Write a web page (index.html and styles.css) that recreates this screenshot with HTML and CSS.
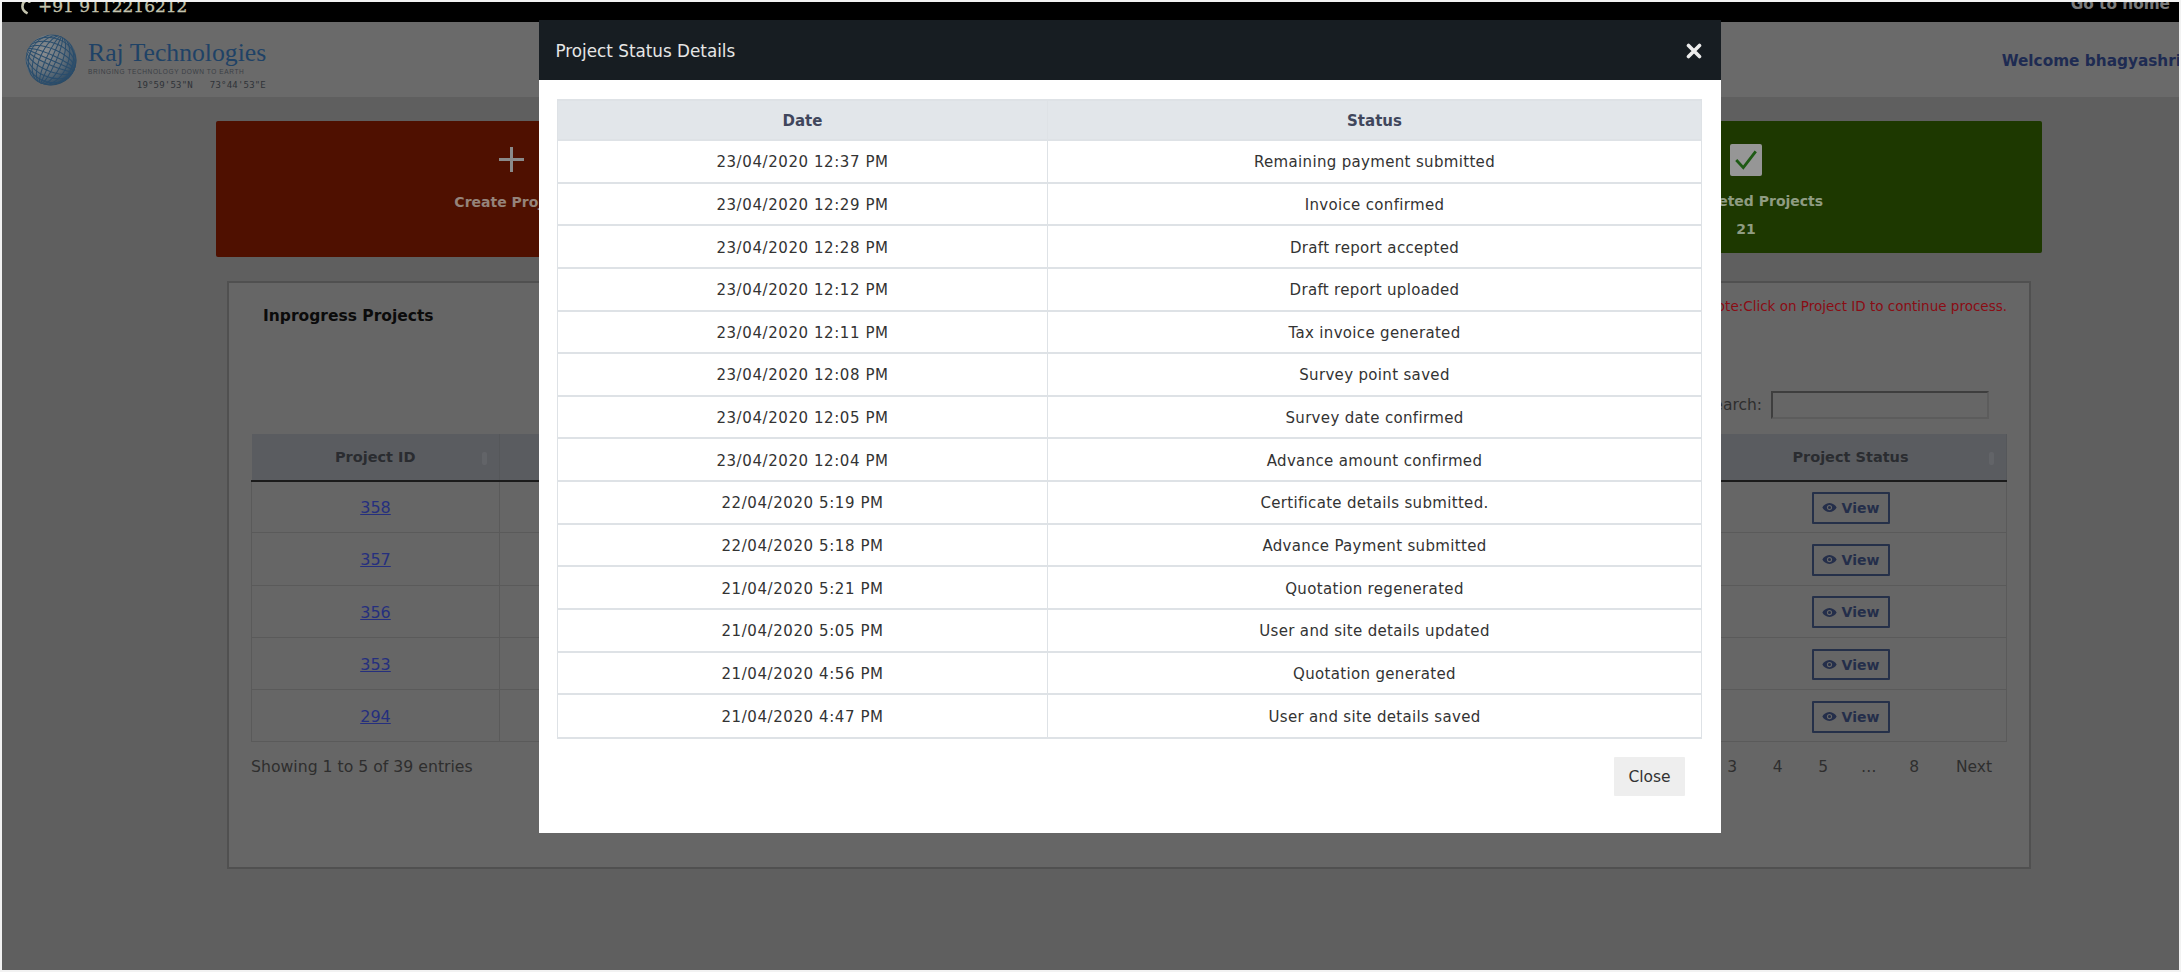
FILE: index.html
```html
<!DOCTYPE html>
<html lang="en">
<head>
<meta charset="utf-8">
<title>Project Status Details</title>
<link rel="stylesheet" href="styles.css">
</head>
<body>
<div class="topbar">
  <span class="phone"><svg class="phone-icon" viewBox="0 0 14 20" aria-hidden="true"><path d="M10 3C6 4 4 7 4 10.500c0 3.500 2 6 6 8" fill="none" stroke="#c4c4ae" stroke-width="3"/><circle cx="12" cy="4.500" r="2" fill="#c4c4ae"/></svg>+91 9112216212</span>
  <span class="home-link">Go to home</span>
</div>
<header class="site-header">
  <div class="logo">
    <svg class="globe" viewBox="0 0 52 52" aria-hidden="true">
      <defs>
        <radialGradient id="globeFill" cx="35%" cy="32%" r="75%">
          <stop offset="0" stop-color="#8b8e90"/>
          <stop offset="0.55" stop-color="#66727c"/>
          <stop offset="1" stop-color="#24445f"/>
        </radialGradient>
        <clipPath id="globeClip"><circle cx="26" cy="26" r="25.5"/></clipPath>
      </defs>
      <circle cx="26" cy="26" r="25.5" fill="url(#globeFill)"/>
      <g clip-path="url(#globeClip)" fill="none" stroke="#2a4d6c" stroke-width="1" transform="rotate(24 26 26)">
        <ellipse cx="26" cy="26" rx="5" ry="26"/>
        <ellipse cx="26" cy="26" rx="11" ry="26"/>
        <ellipse cx="26" cy="26" rx="17" ry="26"/>
        <ellipse cx="26" cy="26" rx="22" ry="26"/>
        <ellipse cx="26" cy="26" rx="26" ry="5"/>
        <ellipse cx="26" cy="26" rx="26" ry="11"/>
        <ellipse cx="26" cy="26" rx="26" ry="17"/>
        <ellipse cx="26" cy="26" rx="26" ry="22"/>
        <path d="M0 26H52M26 0V52"/>
      </g>
    </svg>
    <div class="logo-text">
      <div class="logo-name">Raj Technologies</div>
      <div class="logo-tag">BRINGING TECHNOLOGY DOWN TO EARTH</div>
      <div class="logo-coords">19°59'53"N&nbsp;&nbsp;&nbsp;73°44'53"E</div>
    </div>
  </div>
  <div class="welcome">Welcome bhagyashri</div>
</header>
<main class="content">
  <section class="cards">
    <div class="card card-red">
      <svg class="plus-icon" viewBox="0 0 25 25" aria-hidden="true"><path d="M12.500 0V25M0 12.500H25" stroke="#8a8a8a" stroke-width="3"/></svg>
      <div class="card-label">Create Project</div>
    </div>
    <div class="card card-mid"></div>
    <div class="card card-green">
      <span class="check-box"><svg viewBox="0 0 24 24" aria-hidden="true"><path d="M3 12l6.500 7L21 4" fill="none" stroke="#1e5a14" stroke-width="2.600"/></svg></span>
      <div class="card-label">Completed Projects</div>
      <div class="card-count">21</div>
    </div>
  </section>
  <section class="panel">
    <div class="panel-head">
      <h2 class="panel-title">Inprogress Projects</h2>
      <p class="panel-note">Note:Click on Project ID to continue process.</p>
    </div>
    <div class="search-row"><label class="search-label">Search:</label><span class="search-input"></span></div>
    <table class="projects">
      <colgroup><col class="col-id"><col><col class="col-status"></colgroup>
      <thead><tr><th>Project ID<span class="sort"></span></th><th></th><th>Project Status<span class="sort"></span></th></tr></thead>
      <tbody>
        <tr><td><a href="#">358</a></td><td></td><td><a class="view-btn" href="#"><svg class="eye" viewBox="0 0 20 14" aria-hidden="true"><path fill-rule="evenodd" d="M10 1C5.500 1 2 4 .5 7 2 10 5.500 13 10 13s8-3 9.500-6C18 4 14.500 1 10 1zm0 2.500a3.500 3.500 0 1 1 0 7 3.500 3.500 0 0 1 0-7zM10 5a2 2 0 1 0 0 4 2 2 0 0 0 0-4z"/></svg>View</a></td></tr>
        <tr><td><a href="#">357</a></td><td></td><td><a class="view-btn" href="#"><svg class="eye" viewBox="0 0 20 14" aria-hidden="true"><path fill-rule="evenodd" d="M10 1C5.500 1 2 4 .5 7 2 10 5.500 13 10 13s8-3 9.500-6C18 4 14.500 1 10 1zm0 2.500a3.500 3.500 0 1 1 0 7 3.500 3.500 0 0 1 0-7zM10 5a2 2 0 1 0 0 4 2 2 0 0 0 0-4z"/></svg>View</a></td></tr>
        <tr><td><a href="#">356</a></td><td></td><td><a class="view-btn" href="#"><svg class="eye" viewBox="0 0 20 14" aria-hidden="true"><path fill-rule="evenodd" d="M10 1C5.500 1 2 4 .5 7 2 10 5.500 13 10 13s8-3 9.500-6C18 4 14.500 1 10 1zm0 2.500a3.500 3.500 0 1 1 0 7 3.500 3.500 0 0 1 0-7zM10 5a2 2 0 1 0 0 4 2 2 0 0 0 0-4z"/></svg>View</a></td></tr>
        <tr><td><a href="#">353</a></td><td></td><td><a class="view-btn" href="#"><svg class="eye" viewBox="0 0 20 14" aria-hidden="true"><path fill-rule="evenodd" d="M10 1C5.500 1 2 4 .5 7 2 10 5.500 13 10 13s8-3 9.500-6C18 4 14.500 1 10 1zm0 2.500a3.500 3.500 0 1 1 0 7 3.500 3.500 0 0 1 0-7zM10 5a2 2 0 1 0 0 4 2 2 0 0 0 0-4z"/></svg>View</a></td></tr>
        <tr><td><a href="#">294</a></td><td></td><td><a class="view-btn" href="#"><svg class="eye" viewBox="0 0 20 14" aria-hidden="true"><path fill-rule="evenodd" d="M10 1C5.500 1 2 4 .5 7 2 10 5.500 13 10 13s8-3 9.500-6C18 4 14.500 1 10 1zm0 2.500a3.500 3.500 0 1 1 0 7 3.500 3.500 0 0 1 0-7zM10 5a2 2 0 1 0 0 4 2 2 0 0 0 0-4z"/></svg>View</a></td></tr>
      </tbody>
    </table>
    <div class="table-foot">
      <span class="entries">Showing 1 to 5 of 39 entries</span>
      <nav class="pager"><span>3</span><span>4</span><span>5</span><span>…</span><span>8</span><span class="pager-next">Next</span></nav>
    </div>
  </section>
</main>
<div class="modal">
  <div class="modal-head">
    <span class="modal-title">Project Status Details</span>
    <svg class="modal-x" viewBox="0 0 16 16" aria-hidden="true"><path d="M2.500 2.500l11 11M13.500 2.500l-11 11" stroke="#ececec" stroke-width="3.600" stroke-linecap="round"/></svg>
  </div>
  <div class="modal-body">
    <div class="status-table">
      <div class="status-row status-head"><div>Date</div><div>Status</div></div>
      <div class="status-row"><div>23/04/2020 12:37 PM</div><div>Remaining payment submitted</div></div>
      <div class="status-row"><div>23/04/2020 12:29 PM</div><div>Invoice confirmed</div></div>
      <div class="status-row"><div>23/04/2020 12:28 PM</div><div>Draft report accepted</div></div>
      <div class="status-row"><div>23/04/2020 12:12 PM</div><div>Draft report uploaded</div></div>
      <div class="status-row"><div>23/04/2020 12:11 PM</div><div>Tax invoice generated</div></div>
      <div class="status-row"><div>23/04/2020 12:08 PM</div><div>Survey point saved</div></div>
      <div class="status-row"><div>23/04/2020 12:05 PM</div><div>Survey date confirmed</div></div>
      <div class="status-row"><div>23/04/2020 12:04 PM</div><div>Advance amount confirmed</div></div>
      <div class="status-row"><div>22/04/2020 5:19 PM</div><div>Certificate details submitted.</div></div>
      <div class="status-row"><div>22/04/2020 5:18 PM</div><div>Advance Payment submitted</div></div>
      <div class="status-row"><div>21/04/2020 5:21 PM</div><div>Quotation regenerated</div></div>
      <div class="status-row"><div>21/04/2020 5:05 PM</div><div>User and site details updated</div></div>
      <div class="status-row"><div>21/04/2020 4:56 PM</div><div>Quotation generated</div></div>
      <div class="status-row"><div>21/04/2020 4:47 PM</div><div>User and site details saved</div></div>
    </div>
    <div class="modal-foot"><button class="close-btn" type="button">Close</button></div>
  </div>
</div>
</body>
</html>
```
FILE: styles.css
```css
* { box-sizing: border-box; }
html, body { margin: 0; height: 100%; }
body {
  height: 100vh;
  overflow: hidden;
  border: 2px solid #f2f2f2;
  background: #5f5f5f;
  font-family: "DejaVu Sans", Verdana, sans-serif;
  font-size: 14px;
  color: #333;
}

.topbar {
  height: 19.5px;
  background: #000;
  overflow: hidden;
  display: flex;
  justify-content: space-between;
  align-items: flex-end;
  padding: 0 9px 7px 17px;
}
.phone {
  display: flex;
  align-items: flex-end;
  gap: 7px;
  font-family: "DejaVu Serif", serif;
  font-size: 17px;
  line-height: 17px;
  color: #c4c4ae;
  -webkit-text-stroke: .3px #c4c4ae;
}
.phone-icon { width: 12px; height: 18px; flex: none; }
.home-link {
  font-weight: 700;
  font-size: 15.3px;
  line-height: 15px;
  color: #7c7c7c;
  margin-bottom: 3px;
}

.site-header {
  height: 75.5px;
  background: #6a6a6a;
  display: flex;
  justify-content: space-between;
  align-items: center;
  padding: 0 0 0 23px;
}
.logo { display: flex; align-items: center; gap: 11px; }
.globe { width: 52px; height: 52px; flex: none; margin-top: 2px; }
.logo-text { width: 178px; display: flex; flex-direction: column; margin-top: 13px; }
.logo-name {
  font-family: "Liberation Serif", serif;
  font-size: 25.7px;
  line-height: 27px;
  color: #1f4266;
  white-space: nowrap;
}
.logo-tag {
  font-family: "Liberation Sans", sans-serif;
  font-size: 6.5px;
  line-height: 12px;
  letter-spacing: 0.62px;
  color: #3a3f45;
  white-space: nowrap;
}
.logo-coords {
  font-family: "DejaVu Sans Mono", monospace;
  font-size: 9px;
  line-height: 15px;
  letter-spacing: .2px;
  color: #2f3338;
  text-align: right;
  white-space: nowrap;
}
.welcome {
  font-weight: 700;
  font-size: 15.3px;
  color: #1e2b52;
  white-space: nowrap;
  margin: 3px -2px 0 0;
}

.content { padding: 24px 137px 0 214px; }

.cards { display: flex; align-items: flex-start; gap: 0; }
.card {
  border-radius: 2px;
  display: flex;
  flex-direction: column;
  align-items: center;
  color: #95837a;
}
.card-red { width: 590px; height: 135.5px; background: #4f1000; padding-top: 26px; }
.card-mid { flex: 1; }
.card-green { width: 592px; height: 132px; background: #1d3800; padding-top: 23px; color: #8f9c82; }
.plus-icon { width: 25px; height: 25px; display: block; }
.card-label { font-weight: 700; font-size: 14px; line-height: 20px; margin-top: 20px; white-space: nowrap; }
.card-green .card-label { margin-top: 15px; }
.card-count { font-weight: 700; font-size: 14px; line-height: 20px; margin-top: 8px; }
.check-box {
  width: 32.500px;
  height: 32px;
  background: #969696;
  border-radius: 2px;
  display: flex;
  align-items: center;
  justify-content: center;
}
.check-box svg { width: 26px; height: 26px; }

.panel {
  margin: 24px 11px 0 11px;
  height: 588px;
  background: #666;
  border: 2px solid #505050;
  padding: 0 22px;
}
.panel-head { display: flex; justify-content: space-between; align-items: flex-start; height: 73px; }
.panel-title { margin: 24px 0 0 12px; font-size: 15.5px; line-height: 18px; font-weight: 700; color: #0b0b0b; }
.panel-note { margin: 14px 0 0; font-size: 13.5px; line-height: 18px; color: #8a0c14; }
.search-row {
  display: flex;
  justify-content: flex-end;
  align-items: center;
  gap: 9px;
  margin: 35px 18px 15px 0;
  height: 28px;
}
.search-label { font-size: 15.5px; color: #2e2e2e; }
.search-input {
  width: 218px;
  height: 28px;
  border: 2px solid #5c5c5c;
  border-top-color: #3e3e3e;
  border-left-color: #3e3e3e;
  background: #666;
}

.projects { width: 1756px; border-collapse: collapse; table-layout: fixed; }
.col-id { width: 248px; }
.col-status { width: 312px; }
.projects th {
  height: 47px;
  padding-top: 2px;
  background: #5a5c60;
  color: #2a2c30;
  font-size: 14.5px;
  border-bottom: 2px solid #1b1b1b;
  border-right: 1px solid #55575a;
  position: relative;
}
.projects td {
  height: 52.300px;
  text-align: center;
  border: 1px solid #5a5a5a;
  padding: 2px 0 0;
}
.projects td a:not(.view-btn) { color: #252f7e; font-size: 16px; }
.sort {
  position: absolute;
  right: 12px;
  top: 18px;
  width: 5px;
  height: 13px;
  border-radius: 2px;
  background: #626468;
}
.view-btn {
  display: inline-flex;
  align-items: center;
  justify-content: center;
  gap: 5px;
  width: 78px;
  height: 31.500px;
  border: 2px solid #253049;
  border-radius: 1px;
  color: #242e4a;
  font-weight: 700;
  font-size: 14px;
  text-decoration: none;
  vertical-align: middle;
}
.eye { width: 15px; height: 11px; fill: #242e4a; }

.table-foot { display: flex; justify-content: space-between; align-items: center; margin-top: 14px; }
.entries { font-size: 15.7px; color: #2e2e2e; }
.pager { display: flex; align-items: center; margin-right: 15px; padding-top: 2px; }
.pager span { width: 45.500px; text-align: center; font-size: 15.5px; color: #2e2e2e; }
.pager .pager-next { width: 55px; text-align: right; }

.modal {
  position: fixed;
  left: 538.500px;
  top: 19.500px;
  width: 1182px;
  height: 813px;
  background: #fff;
  display: flex;
  flex-direction: column;
}
.modal-head {
  height: 60.500px;
  flex: none;
  background: #171d22;
  display: flex;
  justify-content: space-between;
  align-items: center;
  padding: 2px 19px 0 17px;
}
.modal-title { font-size: 16.8px; color: #e6e6e6; }
.modal-x { width: 16px; height: 16px; }
.modal-body { padding: 19px 18.500px 0; }
.status-table {
  border: 1px solid #dee2e6;
  border-top-width: 2px;
}
.status-row {
  display: grid;
  grid-template-columns: 490px 1fr;
  height: 42.640px;
  border-bottom: 2px solid #dee2e6;
  color: #333;
  font-size: 15px;
  letter-spacing: .33px;
}
.status-row:last-child { border-bottom-width: 1px; }
.status-row > div {
  display: flex;
  align-items: center;
  justify-content: center;
  padding-top: 2px;
}
.status-row > div:first-child { border-right: 1px solid #dee2e6; letter-spacing: .58px; }
.status-head { height: 40px; background: #e2e6ea; color: #40465c; font-weight: 700; }
.status-head > div:first-child { letter-spacing: 0; }
.status-head > div { letter-spacing: 0; }
.modal-foot { display: flex; justify-content: flex-end; padding: 18.500px 17px 0 0; }
.close-btn {
  width: 71px;
  height: 39px;
  border: 0;
  border-radius: 1px;
  background: #eee;
  color: #333;
  font-family: inherit;
  font-size: 15.500px;
}
```
